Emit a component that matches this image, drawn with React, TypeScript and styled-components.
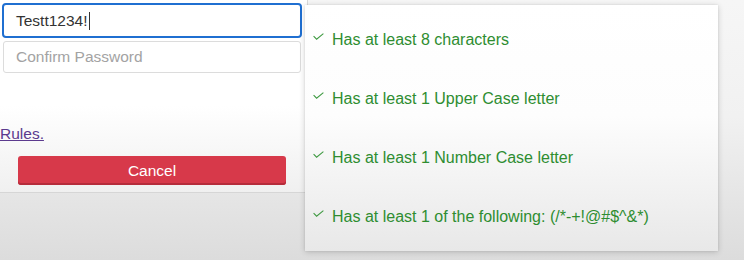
import React from 'react';
import styled, { createGlobalStyle } from 'styled-components';

const GlobalStyle = createGlobalStyle`
  html, body {
    margin: 0;
    padding: 0;
  }
  body {
    font-family: "Liberation Sans", Arial, sans-serif;
  }
`;

const Page = styled.div`
  position: relative;
  width: 744px;
  height: 260px;
  overflow: hidden;
  background: linear-gradient(180deg, #f6f6f6 0%, #f1f1f1 45%, #dcdcdc 100%);
`;

const Card = styled.div`
  box-sizing: border-box;
  width: 308px;
  height: 193px;
  display: flex;
  flex-direction: column;
  padding-top: 3px;
  background: linear-gradient(180deg, #ffffff 0%, #ffffff 55%, #f0f0f0 100%);
  border-right: 1px solid #dadada;
  border-bottom: 1px solid #d6d6d6;
  border-bottom-right-radius: 3px;
`;

const Field = styled.div<{ $focused?: boolean }>`
  box-sizing: border-box;
  display: flex;
  align-items: center;
  font-size: 15.5px;
  color: #333;
  background: #fff;
  ${p => p.$focused ? `
    margin-left: 2px;
    width: 300px;
    height: 35px;
    padding-left: 12px;
    border: 2px solid #1f6fd1;
    border-radius: 4px;
  ` : `
    margin-left: 3px;
    margin-top: 3px;
    width: 298px;
    height: 32px;
    padding-left: 12px;
    border: 1px solid #dcdcdc;
    border-radius: 3px;
    color: #a3a3a3;
  `}
`;

const Caret = styled.span`
  display: inline-block;
  width: 1px;
  height: 18px;
  margin-left: 1px;
  background: #333;
`;

const RulesLink = styled.a`
  margin-top: 52px;
  align-self: flex-start;
  font-size: 15.5px;
  line-height: 18px;
  color: #5b3a8e;
  text-decoration: underline;
  cursor: pointer;
`;

const CancelButton = styled.button`
  box-sizing: border-box;
  margin: 13px 0 0 18px;
  width: 268px;
  height: 29px;
  border: none;
  border-radius: 3px;
  background: #d7394a;
  box-shadow: inset 0 -2px 0 #b52c3b;
  color: #fff;
  font-family: "Liberation Sans", Arial, sans-serif;
  font-size: 15.5px;
  cursor: pointer;
`;

const Popover = styled.div`
  position: absolute;
  left: 305px;
  top: 5px;
  box-sizing: border-box;
  width: 413px;
  height: 246px;
  padding: 5px 0 0 8px;
  background: linear-gradient(180deg, #ffffff 0%, #fdfdfd 45%, #e8e8e8 100%);
  box-shadow: 0 1px 6px rgba(0, 0, 0, 0.18), 0 0 2px rgba(0, 0, 0, 0.08);
`;

const RuleList = styled.ul`
  list-style: none;
  margin: 0;
  padding: 0;
`;

const RuleItem = styled.li`
  display: flex;
  align-items: center;
  height: 59px;
  font-size: 16px;
  color: #2e8d31;
`;

const Check = styled.svg`
  flex: none;
  width: 11px;
  height: 7px;
  margin: 0 8px 6px 0;
`;

const rules = [
  'Has at least 8 characters',
  'Has at least 1 Upper Case letter',
  'Has at least 1 Number Case letter',
  'Has at least 1 of the following: (/*-+!@#$^&*)',
];

export default function App() {
  return (
    <>
      <GlobalStyle />
      <Page>
        <Card>
          <Field $focused role="textbox">
            Testt1234!<Caret />
          </Field>
          <Field role="textbox">Confirm Password</Field>
          <RulesLink>Rules.</RulesLink>
          <CancelButton>Cancel</CancelButton>
        </Card>

        <Popover>
          <RuleList>
            {rules.map(rule => (
              <RuleItem key={rule}>
                <Check viewBox="0 0 11 7">
                  <path d="M0.6 3.2 L3.6 6.2 L10.4 0.6" fill="none" stroke="#3f9a42" strokeWidth="1.1" />
                </Check>
                {rule}
              </RuleItem>
            ))}
          </RuleList>
        </Popover>
      </Page>
    </>
  );
}
